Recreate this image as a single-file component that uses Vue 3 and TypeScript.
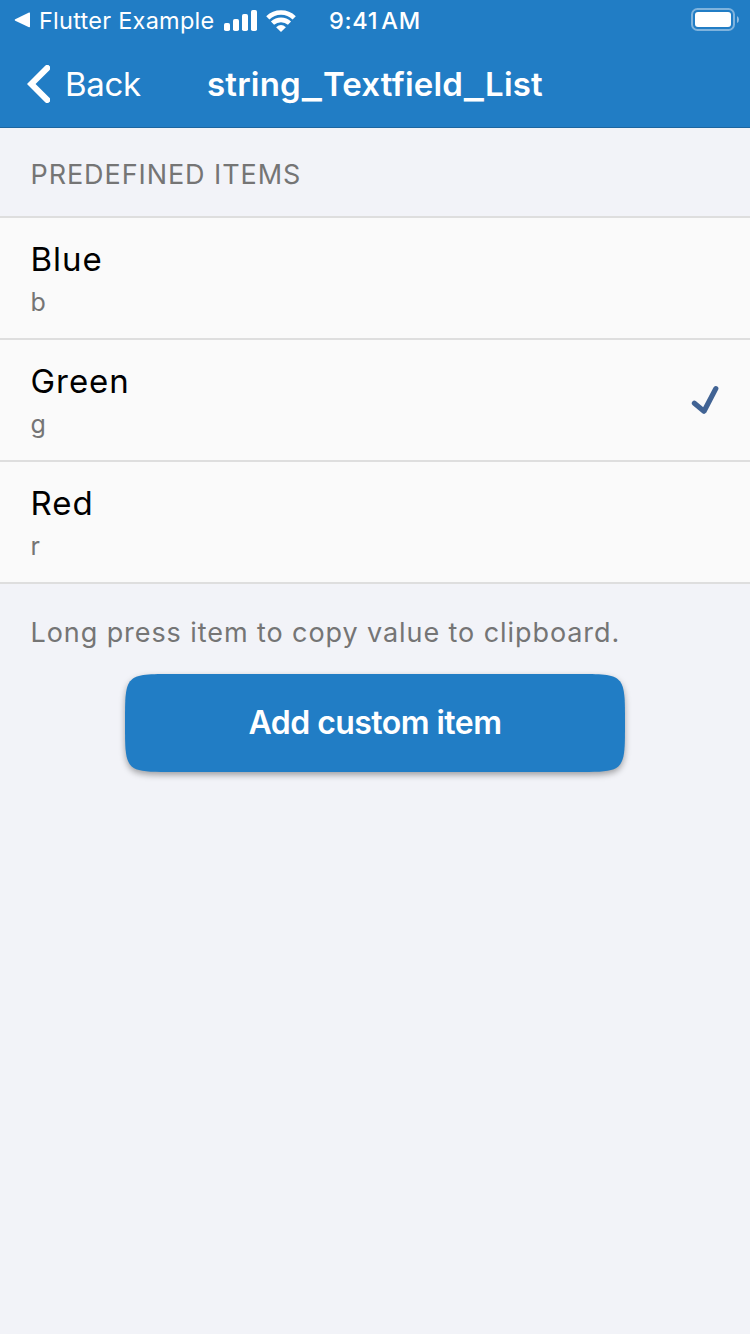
<script setup lang="ts">
import { ref } from 'vue'

interface Item {
  label: string
  value: string
}

const items: Item[] = [
  { label: 'Blue', value: 'b' },
  { label: 'Green', value: 'g' },
  { label: 'Red', value: 'r' },
]

const selected = ref<string>('g')
</script>

<template>
  <div class="screen">
    <header class="top">
      <div class="status">
        <div class="status-left">
          <svg class="caret" width="17" height="16" viewBox="0 0 17 16">
            <path d="M1.2 7.2 15 0.6Q16 0.2 16 1.2V14.6Q16 15.6 15 15.2L1.2 8.8Q0 8 1.2 7.2Z" fill="#fff" />
          </svg>
          <span class="app">Flutter Example</span>
          <svg class="signal" width="33" height="21" viewBox="0 0 33 21">
            <g fill="#fff">
              <rect x="0" y="13" width="6" height="8" rx="1.8" />
              <rect x="9" y="9" width="6" height="12" rx="1.8" />
              <rect x="18" y="4" width="6" height="17" rx="1.8" />
              <rect x="27" y="0" width="6" height="21" rx="1.8" />
            </g>
          </svg>
          <svg class="wifi" width="30" height="22" viewBox="0 0 30 22">
            <g fill="none" stroke="#fff" stroke-width="4.6">
              <path d="M1.8 7.9A19 19 0 0 1 28.2 7.9" />
              <path d="M6.5 13.2A12.4 12.4 0 0 1 23.5 13.2" />
            </g>
            <path d="M15 22 10.1 17.2Q15 12.9 19.9 17.2Z" fill="#fff" />
          </svg>
        </div>
        <span class="time">9:41<span class="ampm">AM</span></span>
        <svg class="battery" width="48" height="24" viewBox="0 0 48 24">
          <rect x="1" y="1" width="42" height="21" rx="5.5" fill="none" stroke="#7fb3dd" stroke-width="2" />
          <rect x="4" y="4" width="36" height="15" rx="3" fill="#fff" />
          <path d="M46 8Q48 9 48 11.5T46 15Z" fill="#8fbce1" />
        </svg>
      </div>
      <nav class="nav">
        <button class="back" type="button">
          <svg width="23" height="38" viewBox="0 0 23 38">
            <path d="M20.3 3 4.2 19 20.3 35" fill="none" stroke="#fff" stroke-width="6" stroke-linecap="round" stroke-linejoin="miter" />
          </svg>
          <span>Back</span>
        </button>
        <h1 class="title">string<span class="bar">_</span>Textfield<span class="bar">_</span>List</h1>
      </nav>
    </header>

    <h2 class="section">PREDEFINED ITEMS</h2>
    <ul class="list">
      <li v-for="item in items" :key="item.value" class="row" @click="selected = item.value">
        <div class="texts">
          <span class="label">{{ item.label }}</span>
          <span class="value">{{ item.value }}</span>
        </div>
        <svg v-if="item.value === selected" class="check" width="28" height="30" viewBox="0 0 28 30">
          <path d="M3.4 18.2 13 26.2 24.8 3.6" fill="none" stroke="#416394" stroke-width="5.2" stroke-linecap="round" stroke-linejoin="round" />
        </svg>
      </li>
    </ul>
    <p class="hint">Long press item to copy value to clipboard.</p>
    <button class="add" type="button">
      <svg class="add-shape" width="500" height="98" viewBox="0 0 500 98">
        <path d="M0 49C0 0 0 0 49 0H451C500 0 500 0 500 49C500 98 500 98 451 98H49C0 98 0 98 0 49Z" fill="#217dc5" />
      </svg>
      <span class="add-text">Add custom item</span>
    </button>
  </div>
</template>

<style>
body {
  margin: 0;
}
</style>

<style scoped>
.screen {
  width: 750px;
  height: 1334px;
  overflow: hidden;
  display: flex;
  flex-direction: column;
  background: #f2f3f8;
  font-family: Inter, "Liberation Sans", sans-serif;
}
.top {
  height: 128px;
  box-sizing: border-box;
  background: #217dc5;
  border-bottom: 1px solid #1d66a0;
  color: #fff;
}
.status {
  height: 40px;
  display: grid;
  grid-template-columns: 329px 1fr auto;
  align-items: center;
  padding-right: 11px;
}
.status-left {
  display: flex;
  align-items: center;
  padding-left: 14px;
}
.app {
  width: 176px;
  margin: 2px 9px 0 8px;
  font-size: 23.5px;
  font-weight: 380;
  line-height: 30px;
  letter-spacing: 0.25px;
  white-space: nowrap;
}
.signal {
  margin-right: 9px;
}
.wifi {
  margin-top: 1px;
}
.time {
  margin-top: 2px;
  font-size: 23.5px;
  line-height: 30px;
  font-weight: 500;
  letter-spacing: 0.7px;
}
.ampm {
  margin-left: 3px;
}
.nav {
  height: 87px;
  display: grid;
  grid-template-columns: 207px 1fr;
  align-items: center;
}
.back {
  display: flex;
  align-items: center;
  gap: 15px;
  padding: 0 0 0 27px;
  border: 0;
  background: none;
  color: #fff;
  font: 400 33px/40px Inter, "Liberation Sans", sans-serif;
  letter-spacing: -0.3px;
}
.back span {
  margin-top: 1px;
}
.title {
  margin: 0;
  font-size: 33px;
  line-height: 40px;
  font-weight: 580;
  letter-spacing: 0.2px;
  white-space: nowrap;
}
.bar {
  display: inline-block;
  width: 22px;
  text-align: center;
  transform: translateY(2px) scaleX(1.3);
}
.section {
  margin: 0;
  height: 88px;
  padding: 4px 30.5px 0;
  box-sizing: border-box;
  display: flex;
  align-items: center;
  font-size: 27px;
  font-weight: 370;
  letter-spacing: 0.92px;
  color: #757575;
}
.list {
  margin: 0;
  padding: 0;
  list-style: none;
  border-top: 2px solid #dedede;
}
.row {
  height: 122px;
  box-sizing: border-box;
  display: flex;
  justify-content: space-between;
  align-items: center;
  padding: 0 31px 0 30.5px;
  background: #fafafa;
  border-bottom: 2px solid #dedede;
}
.texts {
  display: flex;
  flex-direction: column;
  padding-top: 2px;
}
.label {
  font-size: 33px;
  line-height: 46px;
  font-weight: 380;
  letter-spacing: 0.95px;
  color: #000;
}
.value {
  font-size: 25px;
  line-height: 40px;
  font-weight: 370;
  color: #757575;
}
.hint {
  margin: 31px 30px 0 30.5px;
  font-size: 27px;
  line-height: 36px;
  font-weight: 370;
  letter-spacing: 0.92px;
  color: #757575;
  white-space: nowrap;
}
.add {
  position: relative;
  align-self: center;
  width: 500px;
  height: 98px;
  margin-top: 23px;
  padding: 0;
  border: 0;
  background: none;
  color: #fff;
  font: 600 32px/40px Inter, "Liberation Sans", sans-serif;
  letter-spacing: -0.55px;
}
.add-shape {
  position: absolute;
  inset: 0;
  overflow: visible;
  filter: drop-shadow(0 3px 3px rgba(0, 0, 0, 0.34));
}
.add-text {
  position: relative;
}
</style>
